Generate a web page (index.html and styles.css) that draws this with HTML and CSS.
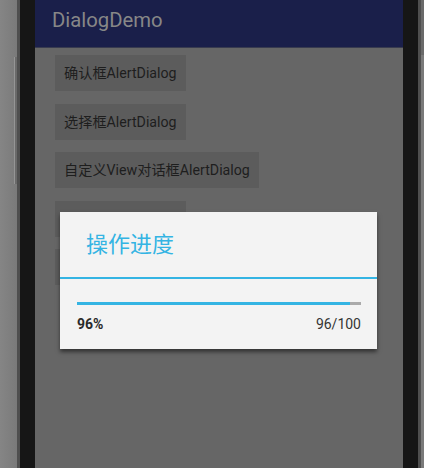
FILE: index.html
```html
<!DOCTYPE html>
<html>
<head>
<meta charset="utf-8">
<link rel="stylesheet" href="styles.css">
</head>
<body>
<div class="frame">
  <div class="edge-left"><div class="side-key"></div></div>
  <div class="rim"></div>
  <div class="bezel"></div>
  <div class="screen">
    <div class="appbar">DialogDemo</div>
    <div class="content">
      <div class="btn">确认框AlertDialog</div>
      <div class="btn">选择框AlertDialog</div>
      <div class="btn">自定义View对话框AlertDialog</div>
      <div class="btn">进度条AlertDialog</div>
      <div class="btn">列表AlertDialog</div>
    </div>
    <div class="dialog">
      <div class="dialog-title">操作进度</div>
      <div class="dialog-body">
        <div class="bar"><div class="bar-fill" style="width: 96%"></div></div>
        <div class="bar-info">
          <span class="pct">96%</span>
          <span class="count">96/100</span>
        </div>
      </div>
    </div>
  </div>
  <div class="bezel bezel-right"></div>
  <div class="rim"></div>
  <div class="edge-right"><div class="side-key-right"></div></div>
</div>
</body>
</html>
```

FILE: styles.css
```css
html, body {
  margin: 0;
  padding: 0;
  width: 424px;
  height: 468px;
  overflow: hidden;
  background: #7d7d7d;
  font-family: Roboto, "Noto Sans CJK SC", sans-serif;
}

.frame {
  display: flex;
  width: 424px;
  height: 468px;
}

.edge-left {
  width: 17px;
  background: linear-gradient(90deg, #858585, #7a7a7a);
  position: relative;
}

.side-key {
  position: absolute;
  left: 14px;
  top: 57px;
  width: 3px;
  height: 127px;
  background: #6a6a6a;
  border-left: 1px solid #959595;
  box-sizing: border-box;
}

.rim {
  width: 3px;
  background: #4f4f4f;
}

.bezel {
  width: 15px;
  background: #161616;
}

.screen {
  width: 368px;
  position: relative;
  background: #666666;
  display: flex;
  flex-direction: column;
}

.appbar {
  height: 48px;
  box-sizing: border-box;
  background: #1a1f4a;
  border-bottom: 1px solid #383b4f;
  color: #878787;
  font-size: 20.3px;
  padding-left: 17px;
  line-height: 41px;
}

.content {
  display: flex;
  flex-direction: column;
  align-items: flex-start;
  gap: 12.5px;
  padding: 7px 0 0 20px;
}

.btn {
  height: 36px;
  box-sizing: border-box;
  padding: 0 9px 0 9px;
  background: #5c5c5c;
  color: #1e1e1e;
  font-size: 14.2px;
  line-height: 37px;
  white-space: nowrap;
}

.dialog {
  position: absolute;
  left: 25px;
  top: 212px;
  width: 317px;
  height: 137px;
  background: #f3f3f3;
  box-shadow: 0 3px 4px rgba(0, 0, 0, 0.5);
  display: flex;
  flex-direction: column;
}

.dialog-title {
  height: 67px;
  box-sizing: border-box;
  border-bottom: 2px solid #34b4e3;
  color: #34b4e3;
  font-size: 22px;
  line-height: 65px;
  padding-left: 26px;
}

.dialog-body {
  padding: 23px 16px 0 17px;
}

.bar {
  height: 3px;
  background: #aaaaaa;
}

.bar-fill {
  height: 3px;
  background: #34b4e3;
}

.bar-info {
  display: flex;
  justify-content: space-between;
  margin-top: 9px;
  line-height: 20px;
  font-size: 14px;
  color: #2a2a2a;
}

.pct {
  font-weight: bold;
}

.count {
  color: #333333;
}

.edge-right {
  flex: 1;
  background: #7a7a7a;
  position: relative;
}

.side-key-right {
  position: absolute;
  left: 0;
  top: 0;
  width: 3px;
  height: 55px;
  background: #6a6a6a;
}
```
